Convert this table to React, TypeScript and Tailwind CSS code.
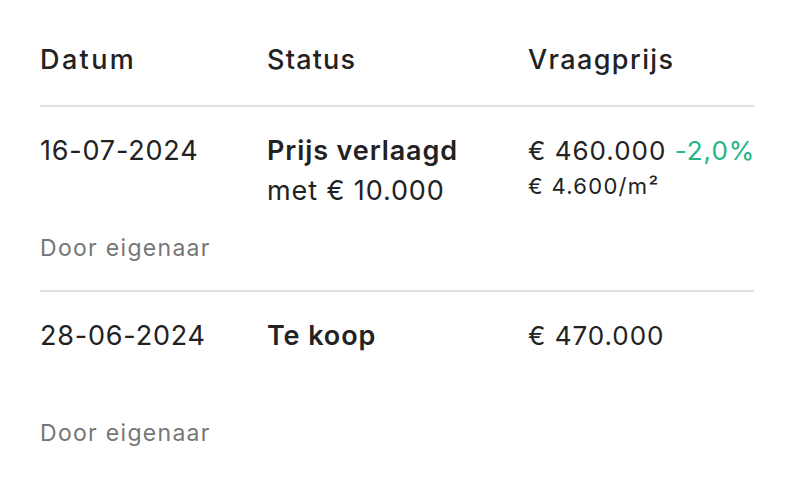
import React from "react";

const font = { fontFamily: "Inter, 'Noto Sans', sans-serif" };

function Row({
  date,
  status,
  price,
  change,
  perM2,
}: {
  date: string;
  status: React.ReactNode;
  price: string;
  change?: string;
  perM2?: string;
}) {
  return (
    <div className="border-t-2 border-[#e0e0e0] pt-[24px] pb-[26px]">
      <div className="grid grid-cols-[227px_261px_1fr] min-h-[80px]">
        <div className="text-[27px] leading-[40px] tracking-[0.8px] text-[#222]">{date}</div>
        <div className="text-[27px] leading-[40px] tracking-[0.9px] text-[#222]">{status}</div>
        <div>
          <div className="text-[26px] leading-[40px] tracking-[1px] text-[#222] whitespace-nowrap">
            {price}
            {change && <span className="text-[#1fb584]"> {change}</span>}
          </div>
          {perM2 && (
            <div className="text-[22px] leading-[30px] tracking-[1.3px] text-[#222]">{perM2}</div>
          )}
        </div>
      </div>
      <div className="mt-[21px] text-[23px] leading-[32px] tracking-[1.3px] text-[#767676]">
        Door eigenaar
      </div>
    </div>
  );
}

export default function App() {
  return (
    <div className="w-[794px] h-[490px] bg-white px-[40px]" style={font}>
      <div className="grid grid-cols-[227px_261px_1fr] pt-[40px] pb-[25px] text-[27px] leading-[40px] text-[#222] font-medium">
        <div className="tracking-[2.4px]">Datum</div>
        <div className="tracking-[1.2px]">Status</div>
        <div className="tracking-[1.4px]">Vraagprijs</div>
      </div>
      <Row
        date="16-07-2024"
        status={
          <>
            <div className="font-semibold">Prijs verlaagd</div>
            <div>met € 10.000</div>
          </>
        }
        price="€ 460.000"
        change="-2,0%"
        perM2="€ 4.600/m²"
      />
      <Row
        date="28-06-2024"
        status={<div className="font-semibold">Te koop</div>}
        price="€ 470.000"
      />
    </div>
  );
}
